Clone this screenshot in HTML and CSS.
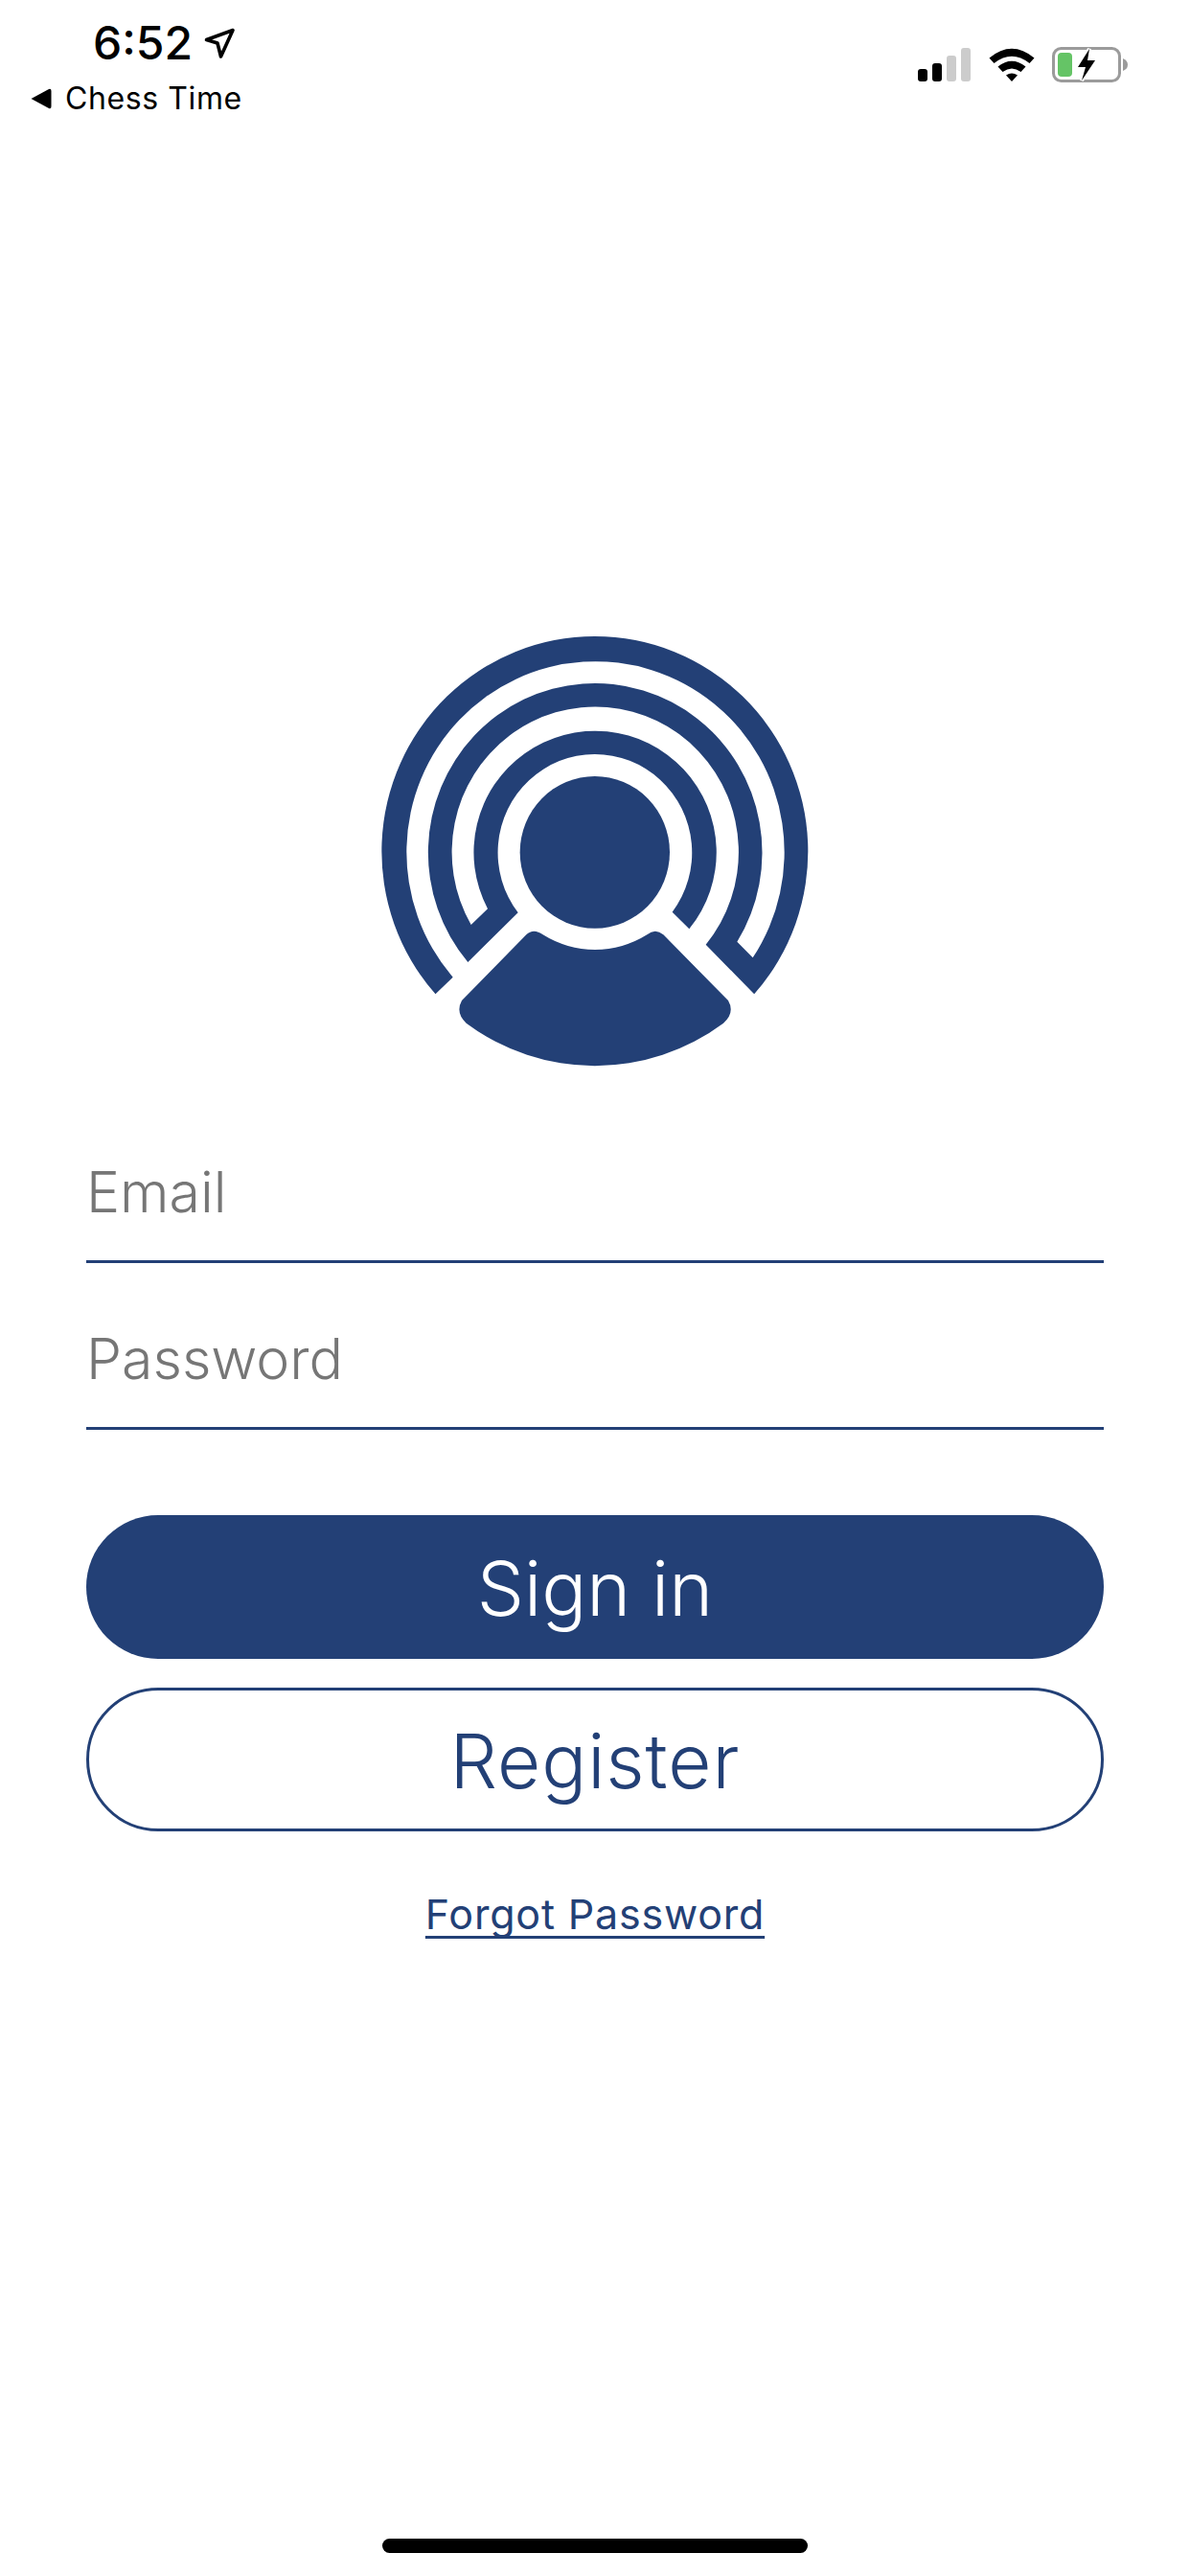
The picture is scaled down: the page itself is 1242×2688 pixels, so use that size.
FILE: index.html
```html
<!DOCTYPE html>
<html lang="en">
<head>
    <title>Chess Time - Sign in</title>
    <meta charset="UTF-8">
    <meta name="viewport" content="width=device-width, initial-scale=1.0">
    <link rel="stylesheet" href="styles.css">
</head>

<body>
    <div class="status-bar">
        <div class="status-left">
            <div class="clock">
                <span class="time">6:52</span>
                <svg class="location-icon" viewBox="0 0 34 34">
                    <path d="M3.5 13.5 L31 3.5 L18.5 31 L15 17 Z" fill="none" stroke="#000" stroke-width="3.6" stroke-linejoin="round"/>
                </svg>
            </div>
            <div class="back-link">
                <svg class="back-icon" viewBox="0 0 22 22">
                    <path d="M0.5 11 L19 1 Q21.5 0 21.5 3 L21.5 19 Q21.5 22 19 21 Z" fill="#000"/>
                </svg>
                <span>Chess Time</span>
            </div>
        </div>
        <div class="status-right">
            <div class="signal">
                <span class="bar bar-1"></span>
                <span class="bar bar-2"></span>
                <span class="bar bar-3"></span>
                <span class="bar bar-4"></span>
            </div>
            <svg class="wifi-icon" viewBox="0 0 48 36">
                <path d="M0.5 10.5 Q24 -9 47.5 10.5 L42.5 16 Q24 1.5 5.5 16 Z" fill="#000"/>
                <path d="M9.5 19.5 Q24 8 38.5 19.5 L33.5 25 Q24 18 14.5 25 Z" fill="#000"/>
                <path d="M18 28.5 Q24 24.5 30 28.5 L24 35 Z" fill="#000"/>
            </svg>
            <svg class="battery-icon" viewBox="0 0 79 37">
                <rect x="1.5" y="1.5" width="69" height="34" rx="8" fill="none" stroke="#9b9b9b" stroke-width="3"/>
                <path d="M74 12 Q79 14 79 18.5 Q79 23 74 25 Z" fill="#9b9b9b"/>
                <rect x="6" y="6" width="15" height="25" rx="4" fill="#65c466"/>
                <path d="M39 2 L27 21 L35 21 L31 35 L45 14 L37 14 Z" fill="#000" stroke="#fff" stroke-width="4" paint-order="stroke"/>
            </svg>
        </div>
    </div>

    <main class="login">
        <svg class="logo" viewBox="0 0 1440 1470">
            <!-- one continuous band: outer ring, then middle ring, then inner ring -->
            <path class="logo-shape" d="M223.5 1192
                A667.5 673 0 1 1 1221.5 1192
                L1070 1037
                A449 455 0 1 0 335 975
                L387 925
                A380 380 0 1 1 1018 988
                L965 935
                A304 308 0 1 0 482 937
                L325 1092
                A523 530 0 1 1 1168 1028
                L1217 1078
                A591.5 597 0 1 0 278 1139 Z"/>
            <ellipse class="logo-shape" cx="722.5" cy="748" rx="234.5" ry="238"/>
            <path class="logo-shape" d="M306 1212 L508 1006 Q530 985 560 1006
                A307 307 0 0 0 886 1006
                Q912 985 937 1006
                L1140 1212 Q1162 1250 1125 1283
                A673 673 0 0 1 320 1283
                Q285 1250 306 1212 Z"/>
        </svg>

        <form class="login-form">
            <label class="field"><span class="placeholder">Email</span></label>
            <label class="field"><span class="placeholder">Password</span></label>
            <button type="button" class="btn btn-primary">Sign in</button>
            <button type="button" class="btn btn-outline">Register</button>
            <a class="forgot-link" href="#">Forgot Password</a>
        </form>
    </main>

    <div class="home-indicator"></div>
</body>

</html>
```

FILE: styles.css
```css
body {
    font-family: 'Inter', sans-serif;
    margin: 0;
    padding: 0;
    background-color: #ffffff;
    width: 1242px;
    height: 2688px;
    display: flex;
    flex-direction: column;
    overflow: hidden;
}

.status-bar {
    height: 640px;
    box-sizing: border-box;
    padding: 0 65px 0 32px;
    display: flex;
    justify-content: space-between;
    align-items: flex-start;
    flex-shrink: 0;
}

.status-left {
    display: flex;
    flex-direction: column;
}

.clock {
    display: flex;
    align-items: center;
    margin: 20px 0 0 65px;
    height: 50px;
}

.time {
    font-size: 48px;
    font-weight: 500;
    line-height: 50px;
    color: #000;
}

.location-icon {
    width: 34px;
    height: 34px;
    margin-left: 11px;
}

.back-link {
    display: flex;
    align-items: center;
    margin-top: 14px;
    font-size: 32px;
    letter-spacing: 0.6px;
    line-height: 38px;
    color: #000;
}

.back-icon {
    width: 22px;
    height: 22px;
    margin-right: 14px;
}

.status-right {
    display: flex;
    align-items: center;
    margin-top: 49px;
}

.signal {
    display: flex;
    align-items: flex-end;
    gap: 5px;
    height: 35px;
}

.bar {
    width: 10px;
    border-radius: 3px;
    background-color: #000;
}

.bar-1 { height: 13px; }
.bar-2 { height: 19px; }
.bar-3 { height: 27px; background-color: #cccccc; }
.bar-4 { height: 35px; background-color: #cccccc; }

.wifi-icon {
    width: 48px;
    height: 36px;
    margin-left: 19px;
}

.battery-icon {
    width: 79px;
    height: 37px;
    margin-left: 18px;
    overflow: visible;
}

.login {
    display: flex;
    flex-direction: column;
    align-items: center;
}

.logo {
    width: 480px;
    height: 490px;
    margin-right: 2px;
}

.logo-shape {
    fill: #234076;
}

.login-form {
    width: 1062px;
    display: flex;
    flex-direction: column;
}

.field {
    height: 174px;
    box-sizing: border-box;
    display: flex;
    align-items: flex-end;
    padding-bottom: 36px;
    border-bottom: 3px solid #234076;
}

.field:first-child {
    height: 188px;
}

.placeholder {
    font-size: 59px;
    font-weight: 300;
    line-height: 70px;
    color: #767676;
}

.btn {
    width: 100%;
    height: 150px;
    box-sizing: border-box;
    border-radius: 75px;
    font-family: 'Inter', sans-serif;
    font-size: 78px;
    font-weight: 300;
    padding: 3px 0 0;
}

.btn-primary {
    margin-top: 89px;
    background-color: #234076;
    border: none;
    color: #ffffff;
}

.btn-outline {
    margin-top: 30px;
    background-color: #ffffff;
    border: 3px solid #234076;
    color: #234076;
    letter-spacing: 1px;
}

.forgot-link {
    align-self: center;
    margin-top: 60px;
    font-size: 43px;
    letter-spacing: 0.8px;
    line-height: 52px;
    color: #234076;
    text-decoration: underline;
    text-decoration-thickness: 3px;
    text-decoration-skip-ink: none;
    text-underline-offset: 7px;
}

.home-indicator {
    position: absolute;
    left: 399px;
    top: 2649px;
    width: 444px;
    height: 15px;
    border-radius: 8px;
    background-color: #000;
}
```
